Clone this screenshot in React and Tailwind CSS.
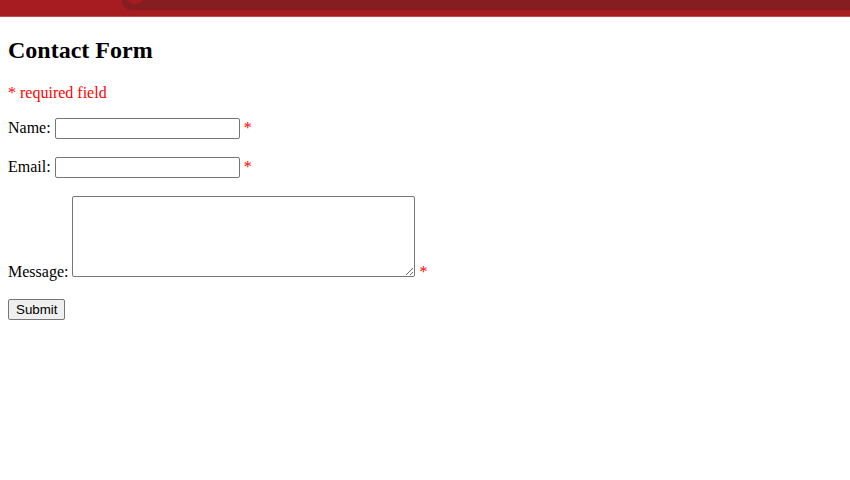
import React from "react"

const Req = () => <span className="text-[#ff0000]">*</span>

const App = () => {
  return (
    <div className="min-h-screen bg-white text-black font-['Liberation_Serif',serif] text-base leading-[normal]">
      {/* TOP BAR */}
      <div className="h-[17px] bg-[#a61c21] border-b border-[#c34a4d] flex overflow-hidden">
        <div className="ml-[122px] flex-1 h-[10px] bg-[#861d20] rounded-bl-[9px] relative">
          <span className="absolute left-[0px] top-[-19px] w-[26px] h-[26px] rounded-full bg-[#a61c21] border-[3px] border-[#861d20]" />
        </div>
      </div>

      <div className="px-2">
        <h2 className="text-[24px] font-bold mt-[20px] mb-[20px] leading-[27px]">Contact Form</h2>

        <p className="text-[#ff0000] mb-4">* required field</p>

        <form onSubmit={(e) => e.preventDefault()}>
          <p className="mb-[18px]">
            Name:{" "}
            <input
              type="text"
              className="w-[185px] h-[21px] border border-[#767676] rounded-[2px] px-[2px] py-[1px] text-[13px] align-baseline"
            />{" "}
            <Req />
          </p>

          <p className="mb-[18px]">
            Email:{" "}
            <input
              type="text"
              className="w-[185px] h-[21px] border border-[#767676] rounded-[2px] px-[2px] py-[1px] text-[13px] align-baseline"
            />{" "}
            <Req />
          </p>

          <p className="mb-[18px]">
            Message:{" "}
            <textarea className="w-[343px] h-[81px] border border-[#767676] rounded-[2px] px-[2px] py-[1px] text-[13px] align-baseline resize" />{" "}
            <Req />
          </p>

          <button
            type="submit"
            className="font-['Liberation_Sans',sans-serif] text-[13.33px] bg-[#efefef] border border-[#767676] rounded-[2px] px-[7px] h-[21px] leading-[17px]"
          >
            Submit
          </button>
        </form>
      </div>
    </div>
  )
}

export default App
